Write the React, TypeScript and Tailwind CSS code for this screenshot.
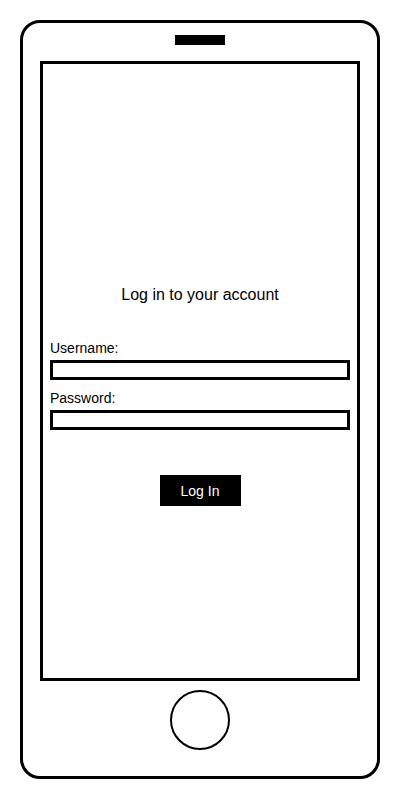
export default function App() {
  return (
    <div className="min-h-screen bg-white pl-[20px] pt-[20px] font-['Liberation_Sans',Arial,sans-serif] text-black">
      <div className="flex h-[759px] w-[360px] flex-col items-center rounded-[20px] border-[3px] border-black">
        <div className="mt-[12px] h-[10px] w-[50px] bg-black" />
        <div className="mt-[16px] flex h-[620px] w-[320px] flex-col border-[3px] border-black px-[7px]">
          <h1 className="mt-[222px] text-center text-[16px] leading-[18px] font-normal">
            Log in to your account
          </h1>
          <label className="mt-[36px] text-[14px] leading-[16px]">Username:</label>
          <div className="mt-[4px] h-[20px] w-[300px] border-[3px] border-black" />
          <label className="mt-[10px] text-[14px] leading-[16px]">Password:</label>
          <div className="mt-[4px] h-[20px] w-[300px] border-[3px] border-black" />
          <div className="mt-[45px] flex justify-center">
            <button className="flex h-[31px] w-[81px] items-center justify-center bg-black text-[14px] leading-[16px] text-white">
              Log In
            </button>
          </div>
        </div>
        <div className="mt-[9px] h-[60px] w-[60px] rounded-full border-2 border-black" />
      </div>
    </div>
  )
}
